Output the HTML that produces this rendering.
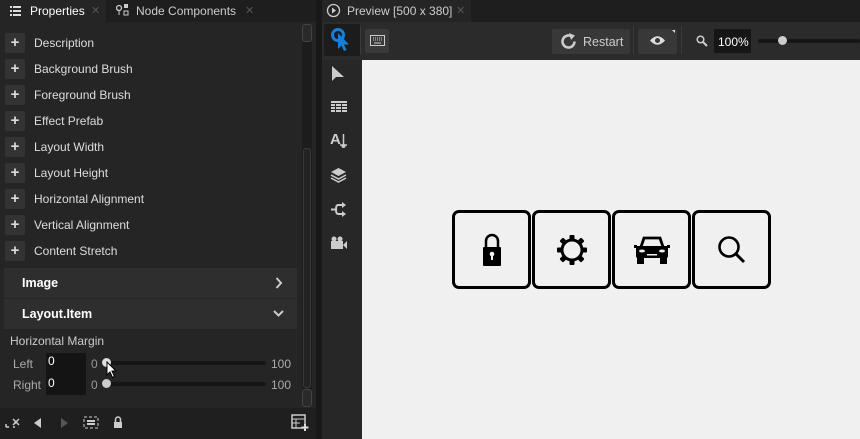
<!DOCTYPE html>
<html><head><style>
*{margin:0;padding:0;box-sizing:border-box}
body{width:860px;height:439px;overflow:hidden;background:#1a1a1a;font-family:"Liberation Sans",sans-serif;font-size:12px;color:#d8d8d8;position:relative}
.abs{position:absolute}
.row{position:absolute;left:0;height:26px;width:300px}
.plus{position:absolute;left:5px;top:3px;width:20px;height:20px;background:#333;border-radius:2px;color:#ddd;font-size:15px;font-weight:bold;text-align:center;line-height:20px}
.row span{position:absolute;left:34px;top:6px;color:#ddd}
.hdr{position:absolute;left:4px;width:293px;height:30px;background:#2e2e2e;font-weight:bold;color:#fff;font-size:12.5px}
.hdr span{position:absolute;left:18px;top:8px}
</style></head><body>
<div class="abs" style="left:0;top:0;width:316px;height:22px;background:#1e1e1e"></div>
<div class="abs" style="left:0;top:0;width:106px;height:22px;background:#252525"></div>
<svg class="abs" style="left:10px;top:6px" width="12" height="10"><g fill="#ddd"><rect x="0" y="0" width="2" height="2"/><rect x="3" y="0" width="8" height="2"/><rect x="0" y="4" width="2" height="2"/><rect x="3" y="4" width="8" height="2"/><rect x="0" y="8" width="2" height="2"/><rect x="3" y="8" width="8" height="2"/></g></svg>
<div class="abs" style="left:30px;top:4px;color:#fff">Properties</div>
<div class="abs" style="left:91px;top:4px;color:#555;font-size:11px">✕</div>
<svg class="abs" style="left:116px;top:4px" width="13" height="12"><circle cx="3" cy="4" r="2.5" fill="none" stroke="#ccc" stroke-width="1.3"/><rect x="8" y="0" width="4" height="4" fill="#ccc"/><rect x="8" y="7" width="4" height="4" fill="none" stroke="#ccc"/><line x1="3" y1="7" x2="3" y2="11" stroke="#ccc"/></svg>
<div class="abs" style="left:136px;top:4px;color:#ccc">Node Components</div>
<div class="abs" style="left:245px;top:4px;color:#555;font-size:11px">✕</div>
<div class="abs" style="left:0;top:22px;width:316px;height:386px;background:#252525"></div>
<div class="abs" style="left:302px;top:24px;width:10px;height:383px;background:#1c1c1c;border-radius:3px"></div>
<div class="abs" style="left:302px;top:24px;width:10px;height:18px;border:1px solid #444;border-radius:3px;background:#2a2a2a"></div>
<div class="abs" style="left:303px;top:148px;width:8px;height:240px;border:1px solid #3a3a3a;border-radius:3px;background:#222"></div>
<div class="abs" style="left:302px;top:389px;width:10px;height:18px;border:1px solid #444;border-radius:3px;background:#2a2a2a"></div>

<div class="row" style="top:30px"><div class="plus">+</div><span>Description</span></div>
<div class="row" style="top:56px"><div class="plus">+</div><span>Background Brush</span></div>
<div class="row" style="top:82px"><div class="plus">+</div><span>Foreground Brush</span></div>
<div class="row" style="top:108px"><div class="plus">+</div><span>Effect Prefab</span></div>
<div class="row" style="top:134px"><div class="plus">+</div><span>Layout Width</span></div>
<div class="row" style="top:160px"><div class="plus">+</div><span>Layout Height</span></div>
<div class="row" style="top:186px"><div class="plus">+</div><span>Horizontal Alignment</span></div>
<div class="row" style="top:212px"><div class="plus">+</div><span>Vertical Alignment</span></div>
<div class="row" style="top:238px"><div class="plus">+</div><span>Content Stretch</span></div>

<div class="hdr" style="top:268px"><span>Image</span><svg class="abs" style="left:271px;top:9px" width="8" height="12"><path d="M1.5 1L6 6L1.5 11" stroke="#ccc" stroke-width="2" fill="none"/></svg></div>
<div class="hdr" style="top:299px"><span>Layout.Item</span><svg class="abs" style="left:269px;top:11px" width="11" height="8"><path d="M1 1L5.5 5.5L10 1" stroke="#ccc" stroke-width="2" fill="none"/></svg></div>
<div class="abs" style="left:10px;top:334px;color:#ccc">Horizontal Margin</div>
<div class="abs" style="left:13px;top:357px;color:#aaa">Left</div>
<div class="abs" style="left:13px;top:378px;color:#aaa">Right</div>
<div class="abs" style="left:46px;top:353px;width:40px;height:42px;background:#141414"></div>
<div class="abs" style="left:48px;top:354px;color:#fff">0</div>
<div class="abs" style="left:48px;top:376px;color:#fff">0</div>
<div class="abs" style="left:91px;top:357px;color:#999">0</div>
<div class="abs" style="left:91px;top:378px;color:#999">0</div>
<div class="abs" style="left:104px;top:361px;width:162px;height:4px;background:#161616;border-radius:2px"></div>
<div class="abs" style="left:104px;top:382px;width:162px;height:4px;background:#161616;border-radius:2px"></div>
<div class="abs" style="left:102px;top:358px;width:9px;height:9px;background:#ddd;border-radius:50%"></div>
<div class="abs" style="left:102px;top:379px;width:9px;height:9px;background:#ccc;border-radius:50%"></div>
<div class="abs" style="left:271px;top:357px;color:#aaa">100</div>
<div class="abs" style="left:271px;top:378px;color:#aaa">100</div>
<svg class="abs" style="left:106px;top:361px" width="12" height="18"><path d="M1 1L1 14L4 11L6.5 16.5L8.5 15.5L6 10L10 10Z" fill="#fff" stroke="#000" stroke-width="1"/></svg>
<div class="abs" style="left:0;top:408px;width:316px;height:31px;background:#1f1f1f"></div>
<svg class="abs" style="left:5px;top:415px" width="16" height="14"><path d="M1 12h3M1 9v3M8 12h2M10 7v2M8 4l6 6M14 4l-6 6" stroke="#ccc" stroke-width="1.5"/></svg>
<svg class="abs" style="left:34px;top:418px" width="8" height="10"><path d="M7 0L0 5L7 10Z" fill="#ccc"/></svg>
<svg class="abs" style="left:61px;top:418px" width="8" height="10"><path d="M0 0L7 5L0 10Z" fill="#555"/></svg>
<svg class="abs" style="left:83px;top:416px" width="16" height="13"><rect x="1" y="1" width="14" height="11" fill="none" stroke="#ccc" stroke-dasharray="3 2"/><rect x="4" y="4" width="8" height="2" fill="#ccc"/><rect x="4" y="7" width="8" height="2" fill="#ccc"/></svg>
<svg class="abs" style="left:113px;top:416px" width="10" height="12"><path d="M2.5 6V3.5a2.5 2.5 0 015 0V6" stroke="#ccc" stroke-width="1.5" fill="none"/><rect x="1" y="6" width="8" height="6" fill="#ccc"/></svg>
<svg class="abs" style="left:291px;top:414px" width="18" height="18"><rect x="1" y="1" width="13" height="13" fill="none" stroke="#ccc" stroke-width="1.5"/><path d="M1 5h13M1 9h8M5 5v9" stroke="#ccc"/><path d="M14 10v7M10.5 13.5h7" stroke="#ddd" stroke-width="2"/></svg>
<div class="abs" style="left:316px;top:0;width:6px;height:439px;background:#181818"></div>
<div class="abs" style="left:322px;top:0;width:538px;height:22px;background:#1e1e1e"></div>
<div class="abs" style="left:322px;top:0;width:149px;height:22px;background:#252525"></div>
<svg class="abs" style="left:326px;top:3px" width="15" height="15"><circle cx="7.5" cy="7.5" r="6" fill="none" stroke="#ccc" stroke-width="1.3"/><path d="M6 4.5L10 7.5L6 10.5Z" fill="#ccc"/></svg>
<div class="abs" style="left:347px;top:4px;color:#ccc">Preview [500 x 380]</div>
<div class="abs" style="left:456px;top:4px;color:#555;font-size:11px">✕</div>
<div class="abs" style="left:322px;top:22px;width:538px;height:38px;background:#2b2b2b"></div>
<div class="abs" style="left:322px;top:60px;width:40px;height:379px;background:#272727"></div>
<div class="abs" style="left:324px;top:24px;width:36px;height:32px;background:#1c1c1c;border-radius:2px"></div>
<svg class="abs" style="left:330px;top:27px" width="22" height="26"><circle cx="8" cy="8" r="5.5" fill="none" stroke="#1a7fd4" stroke-width="3"/><path d="M8 6L8 22L11.5 18.5L14 24L16.5 23L14 17.5L19 17.5Z" fill="#1a7fd4"/></svg>
<div class="abs" style="left:360px;top:26px;width:1px;height:28px;background:#3a3a3a"></div>
<div class="abs" style="left:365px;top:29px;width:24px;height:24px;background:#3a3a3a;border-radius:2px"></div>
<svg class="abs" style="left:370px;top:35px" width="15" height="11"><rect x="0.5" y="0.5" width="14" height="10" fill="none" stroke="#ccc"/><path d="M3 3h1M5 3h1M7 3h1M9 3h1M11 3h1M3 5h1M5 5h1M7 5h1M9 5h1M11 5h1M4 8h7" stroke="#ccc"/></svg>
<div class="abs" style="left:552px;top:29px;width:78px;height:25px;background:#383838;border-radius:2px"></div>
<svg class="abs" style="left:559px;top:32px" width="19" height="19"><path d="M15.5 9.5A6 6 0 1 1 12.5 4.3" fill="none" stroke="#ccc" stroke-width="2.6"/><path d="M10 1L16 3.5L12 8Z" fill="#ccc"/></svg>
<div class="abs" style="left:583px;top:35px;color:#ccc;font-size:12.5px">Restart</div>
<div class="abs" style="left:633px;top:26px;width:1px;height:28px;background:#3a3a3a"></div>
<div class="abs" style="left:638px;top:29px;width:39px;height:25px;background:#383838;border-radius:2px"></div>
<svg class="abs" style="left:649px;top:35px" width="17" height="11"><path d="M1 5.5Q8.5 -3 16 5.5Q8.5 14 1 5.5Z" fill="#ddd"/><circle cx="8.5" cy="5.5" r="2.5" fill="#383838"/></svg>
<div class="abs" style="left:672px;top:30px;width:0;height:0;border-left:3px solid transparent;border-top:3px solid #ddd"></div>
<div class="abs" style="left:681px;top:26px;width:1px;height:28px;background:#3a3a3a"></div>
<svg class="abs" style="left:696px;top:35px" width="12" height="12"><circle cx="4.5" cy="4.5" r="3.3" fill="none" stroke="#ccc" stroke-width="1.5"/><path d="M7 7L11 11" stroke="#ccc" stroke-width="2"/></svg>
<div class="abs" style="left:714px;top:29px;width:37px;height:24px;background:#161616"></div>
<div class="abs" style="left:718px;top:35px;color:#fff">100%</div>
<div class="abs" style="left:758px;top:39px;width:102px;height:4px;background:#161616;border-radius:2px"></div>
<div class="abs" style="left:778px;top:36px;width:9px;height:9px;background:#ccc;border-radius:50%"></div>
<svg class="abs" style="left:331px;top:66px" width="13" height="17"><path d="M1 0V15L5 11L13 11Z" fill="#ccc"/></svg>
<svg class="abs" style="left:331px;top:101px" width="16" height="12"><rect x="0" y="0" width="16" height="2" fill="#ccc"/><g fill="#ccc"><rect x="0" y="3" width="4" height="2"/><rect x="5" y="3" width="5" height="2"/><rect x="11" y="3" width="5" height="2"/><rect x="0" y="6" width="4" height="2"/><rect x="5" y="6" width="5" height="2"/><rect x="11" y="6" width="5" height="2"/><rect x="0" y="9" width="4" height="2"/><rect x="5" y="9" width="5" height="2"/><rect x="11" y="9" width="5" height="2"/></g></svg>
<div class="abs" style="left:330px;top:131px;color:#ccc;font-weight:bold;font-size:15px">A</div>
<svg class="abs" style="left:339px;top:134px" width="9" height="15"><path d="M4.5 0V11M1 11H8" stroke="#ccc" stroke-width="1.5"/><circle cx="4.5" cy="12" r="2" fill="#ccc"/></svg>
<svg class="abs" style="left:330px;top:167px" width="17" height="16"><path d="M8.5 1L16 5L8.5 9L1 5Z" fill="#ccc"/><path d="M1 8L8.5 12L16 8M1 11L8.5 15L16 11" stroke="#ccc" stroke-width="1.5" fill="none"/></svg>
<svg class="abs" style="left:330px;top:202px" width="17" height="15"><path d="M1 7.5H6M12 3H8Q6 3 6 7.5Q6 12 8 12H12" stroke="#ccc" stroke-width="2" fill="none"/><path d="M12 0L16 3L12 6ZM12 9L16 12L12 15Z" fill="#ccc"/></svg>
<svg class="abs" style="left:330px;top:236px" width="18" height="14"><circle cx="4" cy="3" r="2.5" fill="#ccc"/><circle cx="10" cy="3" r="2.5" fill="#ccc"/><rect x="1" y="5" width="12" height="8" fill="#ccc"/><path d="M13 9L17 5V13Z" fill="#ccc"/></svg>
<div class="abs" style="left:362px;top:60px;width:498px;height:379px;background:#f0f0f0"></div>
<div class="abs" style="left:452px;top:210px;width:79px;height:79px;border:3px solid #000;border-radius:7px"></div>
<div class="abs" style="left:532px;top:210px;width:79px;height:79px;border:3px solid #000;border-radius:7px"></div>
<div class="abs" style="left:612px;top:210px;width:79px;height:79px;border:3px solid #000;border-radius:7px"></div>
<div class="abs" style="left:692px;top:210px;width:79px;height:79px;border:3px solid #000;border-radius:7px"></div>
<svg class="abs" style="left:481px;top:233px" width="22" height="34"><path d="M5 15V8a6 6 0 0 1 12 0V15" stroke="#000" stroke-width="2.5" fill="none"/><rect x="2" y="14" width="18" height="19" rx="1" fill="#000"/><circle cx="11" cy="21" r="2.3" fill="#f0f0f0"/><rect x="10" y="22" width="2" height="5" fill="#f0f0f0"/></svg>
<svg class="abs" style="left:556px;top:234px" width="32" height="32"><g fill="#000"><rect x="13.5" y="1" width="5" height="5" rx="1"/><rect x="13.5" y="26" width="5" height="5" rx="1"/><rect x="1" y="13.5" width="5" height="5" rx="1"/><rect x="26" y="13.5" width="5" height="5" rx="1"/><rect x="4.5" y="4.5" width="5" height="5" rx="1" transform="rotate(45 7 7)"/><rect x="22.5" y="4.5" width="5" height="5" rx="1" transform="rotate(45 25 7)"/><rect x="4.5" y="22.5" width="5" height="5" rx="1" transform="rotate(45 7 25)"/><rect x="22.5" y="22.5" width="5" height="5" rx="1" transform="rotate(45 25 25)"/></g><circle cx="16" cy="16" r="10" fill="none" stroke="#000" stroke-width="3"/></svg>
<svg class="abs" style="left:634px;top:234px" width="36" height="31"><path d="M7 13L10 4H26L29 13" stroke="#000" stroke-width="2.8" fill="none"/><rect x="2" y="12" width="32" height="12" rx="2" fill="#000"/><rect x="3" y="22" width="7" height="8" fill="#000"/><rect x="26" y="22" width="7" height="8" fill="#000"/><ellipse cx="8" cy="17" rx="3" ry="1.5" fill="#f0f0f0"/><ellipse cx="28" cy="17" rx="3" ry="1.5" fill="#f0f0f0"/><rect x="13" y="20" width="10" height="1.5" fill="#f0f0f0"/><rect x="0" y="11" width="3" height="3" fill="#000"/><rect x="33" y="11" width="3" height="3" fill="#000"/></svg>
<svg class="abs" style="left:716px;top:234px" width="32" height="32"><circle cx="13" cy="13" r="9.5" fill="none" stroke="#000" stroke-width="2.6"/><path d="M20 20L28 28" stroke="#000" stroke-width="3"/></svg>
</body></html>
